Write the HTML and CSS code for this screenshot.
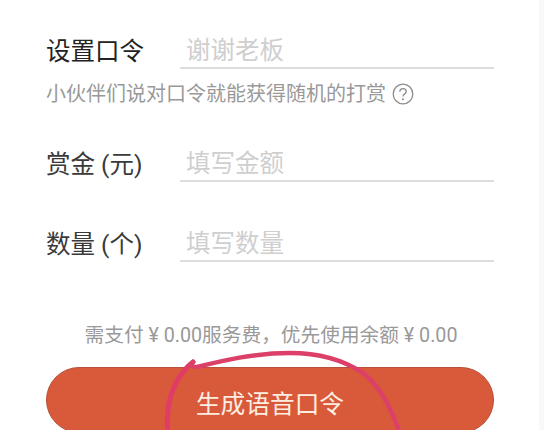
FILE: index.html
```html
<!DOCTYPE html>
<html lang="zh-CN">
<head>
    <meta charset="UTF-8">
    <meta name="viewport" content="width=device-width, initial-scale=1.0">
    <title>语音口令</title>
    <link rel="stylesheet" href="styles.css">
</head>
<body>
    <div class="page">
        <div class="form-row row-first">
            <div class="form-label label-strong">设置口令</div>
            <div class="form-input">谢谢老板</div>
        </div>
        <div class="form-hint">
            <span>小伙伴们说对口令就能获得随机的打赏</span>
            <svg class="hint-icon" viewBox="0 0 22 22" width="22" height="22">
                <circle cx="11" cy="11" r="9.8" fill="none" stroke="#8c8c8c" stroke-width="1.3"/>
                <path d="M7.8 8.8c0-2 1.4-3.2 3.2-3.2s3.2 1.2 3.2 2.9c0 1.3-.8 2-1.7 2.6-.9.6-1.500 1.200-1.500 2.300" fill="none" stroke="#8c8c8c" stroke-width="1.3"/>
                <circle cx="11" cy="16.2" r="1" fill="#8c8c8c"/>
            </svg>
        </div>
        <div class="form-row row-money">
            <div class="form-label">赏金 (元)</div>
            <div class="form-input">填写金额</div>
        </div>
        <div class="form-row row-count">
            <div class="form-label">数量 (个)</div>
            <div class="form-input">填写数量</div>
        </div>
        <div class="fee-note">需支付 ¥ 0.00服务费，优先使用余额 ¥ 0.00</div>
        <button class="submit-btn">生成语音口令</button>
    </div>

    <!-- Hand-drawn circle over the button -->
    <svg class="scribble" viewBox="0 0 544 430" width="544" height="430">
        <path d="M193 362C180 372 170 390 168 410C167 418 167 425 168 432" fill="none" stroke="#e03d66" stroke-width="5" stroke-linecap="round"/>
        <path d="M193 362C190 365 192 367 197 367C225 360 255 353 290 353C320 353 345 361 363 373C380 386 392 410 400 434" fill="none" stroke="#dc3f68" stroke-width="4.5" stroke-linecap="round"/>
    </svg>
</body>
</html>
```
FILE: styles.css
```css
* {
    margin: 0;
    padding: 0;
    box-sizing: border-box;
}

html {
    background: #f8f8f8;
}

body {
    font-family: "Roboto", "Noto Sans CJK SC", sans-serif;
    background: #fff;
    width: 539px;
    height: 430px;
    overflow: hidden;
}

.page {
    padding: 0 45px 0 46px;
}

.form-row {
    display: flex;
    align-items: stretch;
}

.row-first {
    padding-top: 33px;
}

.row-money {
    padding-top: 39px;
}

.row-count {
    padding-top: 44px;
}

.form-label {
    width: 134px;
    padding-top: 2px;
    font-size: 24.5px;
    line-height: 34px;
    color: #3a3a3a;
}

.label-strong {
    color: #222;
}

.form-input {
    flex: 1;
    height: 36px;
    padding: 2px 0 0 6px;
    font-size: 24.5px;
    line-height: 32px;
    color: #cfcfcf;
    border-bottom: 2px solid #ddd;
}

.form-hint {
    display: flex;
    align-items: center;
    gap: 6px;
    margin-top: 11px;
    margin-bottom: -1px;
    font-size: 20px;
    line-height: 28px;
    color: #999;
}

.hint-icon {
    flex-shrink: 0;
}

.fee-note {
    margin-top: 61px;
    margin-right: -2px;
    font-size: 19.7px;
    line-height: 26px;
    color: #999;
    text-align: center;
    white-space: nowrap;
}

.submit-btn {
    display: block;
    width: 100%;
    height: 66px;
    margin-top: 18px;
    padding-top: 3px;
    border: 1px solid #b5523a;
    border-radius: 33px;
    background: #d95a3a;
    color: #fdeee2;
    font-family: inherit;
    font-size: 24.7px;
}

.scribble {
    position: absolute;
    top: 0;
    left: 0;
}
```
